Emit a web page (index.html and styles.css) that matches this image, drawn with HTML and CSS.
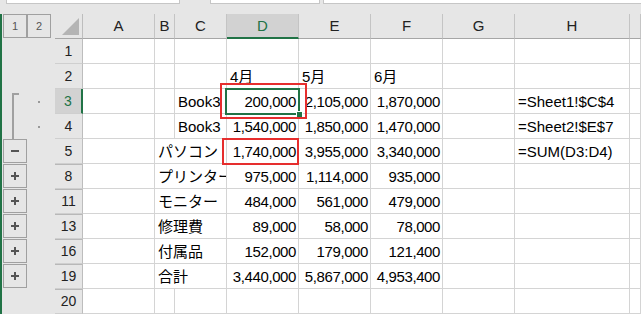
FILE: index.html
```html
<!DOCTYPE html>
<html lang="ja">
<head>
    <meta charset="UTF-8">
    <meta name="viewport" content="width=device-width, initial-scale=1.0">
    <title>アウトライン集計</title>
    <link rel="stylesheet" href="styles.css">
</head>
<body>
    <div class="bar">
        <div class="fld f-name"></div>
        <div class="fld f-mid"></div>
        <div class="fld f-main"></div>
    </div>

    <div class="sheet">
        <!-- 見出し行 -->
        <div class="ol"><span class="btn lvl">1</span><span class="btn lvl">2</span></div>
        <div class="corner"><span class="tri"></span></div>
        <div class="ch">A</div>
        <div class="ch">B</div>
        <div class="ch">C</div>
        <div class="ch on">D</div>
        <div class="ch">E</div>
        <div class="ch">F</div>
        <div class="ch">G</div>
        <div class="ch">H</div>
        <div class="ch"></div>

        <!-- 1 -->
        <div class="ol"></div>
        <div class="rh">1</div>
        <div class="c"></div><div class="c"></div><div class="c"></div><div class="c"></div>
        <div class="c"></div><div class="c"></div><div class="c"></div><div class="c"></div><div class="c"></div>

        <!-- 2 -->
        <div class="ol"></div>
        <div class="rh">2</div>
        <div class="c"></div><div class="c"></div><div class="c"></div>
        <div class="c">4月</div>
        <div class="c">5月</div>
        <div class="c">6月</div>
        <div class="c"></div><div class="c"></div><div class="c"></div>

        <!-- 3 -->
        <div class="ol">
            <span class="slot"><span class="brk-top"></span></span>
            <span class="slot mid"><i class="dot"></i></span>
        </div>
        <div class="rh on">3</div>
        <div class="c"></div><div class="c"></div>
        <div class="c">Book3</div>
        <div class="c num sel">200,000<span class="cursor"><span class="handle"></span></span><span class="mark mark-a"></span></div>
        <div class="c num">2,105,000</div>
        <div class="c num">1,870,000</div>
        <div class="c"></div>
        <div class="c">=Sheet1!$C$4</div>
        <div class="c"></div>

        <!-- 4 -->
        <div class="ol">
            <span class="slot"><span class="brk-line"></span></span>
            <span class="slot mid"><i class="dot"></i></span>
        </div>
        <div class="rh">4</div>
        <div class="c"></div><div class="c"></div>
        <div class="c">Book3</div>
        <div class="c num">1,540,000</div>
        <div class="c num">1,850,000</div>
        <div class="c num">1,470,000</div>
        <div class="c"></div>
        <div class="c">=Sheet2!$E$7</div>
        <div class="c"></div>

        <!-- 5 -->
        <div class="ol"><span class="btn"><svg width="8" height="2" viewBox="0 0 8 2"><rect width="8" height="2" fill="#555"/></svg></span></div>
        <div class="rh">5</div>
        <div class="c"></div>
        <div class="c wide">パソコン</div>
        <div class="c num sel">1,740,000<span class="mark mark-b"></span></div>
        <div class="c num">3,955,000</div>
        <div class="c num">3,340,000</div>
        <div class="c"></div>
        <div class="c">=SUM(D3:D4)</div>
        <div class="c"></div>

        <!-- 8 -->
        <div class="ol"><span class="btn"><svg width="8" height="8" viewBox="0 0 8 8"><path d="M0 4H8M4 0V8" stroke="#555" stroke-width="2"/></svg></span></div>
        <div class="rh gap">8</div>
        <div class="c"></div>
        <div class="c wide">プリンター</div>
        <div class="c num">975,000</div>
        <div class="c num">1,114,000</div>
        <div class="c num">935,000</div>
        <div class="c"></div><div class="c"></div><div class="c"></div>

        <!-- 11 -->
        <div class="ol"><span class="btn"><svg width="8" height="8" viewBox="0 0 8 8"><path d="M0 4H8M4 0V8" stroke="#555" stroke-width="2"/></svg></span></div>
        <div class="rh gap">11</div>
        <div class="c"></div>
        <div class="c wide">モニター</div>
        <div class="c num">484,000</div>
        <div class="c num">561,000</div>
        <div class="c num">479,000</div>
        <div class="c"></div><div class="c"></div><div class="c"></div>

        <!-- 13 -->
        <div class="ol"><span class="btn"><svg width="8" height="8" viewBox="0 0 8 8"><path d="M0 4H8M4 0V8" stroke="#555" stroke-width="2"/></svg></span></div>
        <div class="rh gap">13</div>
        <div class="c"></div>
        <div class="c wide">修理費</div>
        <div class="c num">89,000</div>
        <div class="c num">58,000</div>
        <div class="c num">78,000</div>
        <div class="c"></div><div class="c"></div><div class="c"></div>

        <!-- 16 -->
        <div class="ol"><span class="btn"><svg width="8" height="8" viewBox="0 0 8 8"><path d="M0 4H8M4 0V8" stroke="#555" stroke-width="2"/></svg></span></div>
        <div class="rh gap">16</div>
        <div class="c"></div>
        <div class="c wide">付属品</div>
        <div class="c num">152,000</div>
        <div class="c num">179,000</div>
        <div class="c num">121,400</div>
        <div class="c"></div><div class="c"></div><div class="c"></div>

        <!-- 19 -->
        <div class="ol"><span class="btn"><svg width="8" height="8" viewBox="0 0 8 8"><path d="M0 4H8M4 0V8" stroke="#555" stroke-width="2"/></svg></span></div>
        <div class="rh gap">19</div>
        <div class="c"></div>
        <div class="c wide">合計</div>
        <div class="c num">3,440,000</div>
        <div class="c num">5,867,000</div>
        <div class="c num">4,953,400</div>
        <div class="c"></div><div class="c"></div><div class="c"></div>

        <!-- 20 -->
        <div class="ol"></div>
        <div class="rh gap">20</div>
        <div class="c"></div><div class="c"></div><div class="c"></div><div class="c"></div>
        <div class="c"></div><div class="c"></div><div class="c"></div><div class="c"></div><div class="c"></div>
    </div>
</body>
</html>
```

FILE: styles.css
```css
body {
    margin: 0;
    width: 641px;
    height: 314px;
    overflow: hidden;
    background-color: #e6e6e6;
    font-family: "Liberation Sans", "Noto Sans CJK JP", sans-serif;
    font-size: 15px;
    color: #000;
}
.bar {
    display: flex;
    align-items: flex-start;
    height: 14px;
}
.fld {
    height: 4px;
    box-sizing: border-box;
    background-color: #fff;
    border: 1px solid #c6c6c6;
    border-top: 0;
}
.f-name {
    margin-left: 6px;
    width: 174px;
}
.f-mid {
    margin-left: 30px;
    width: 110px;
}
.f-main {
    margin-left: 3px;
    flex: 1;
    border-right: 0;
}
.sheet {
    display: grid;
    grid-template-columns: 53px 28px 72px 20px 52px 72px 72px 72px 72px 115px 1fr;
    grid-template-rows: repeat(12, 25px);
    border-left: 2px solid #217346;
    background-color: #fff;
}
.sheet > div {
    box-sizing: border-box;
    min-width: 0;
}

/* outline area */
.ol {
    display: flex;
    padding-left: 1px;
    background-color: #e6e6e6;
}
.slot {
    display: flex;
    width: 24px;
}
.slot.mid {
    align-items: center;
    justify-content: center;
}
.btn {
    display: flex;
    align-items: center;
    justify-content: center;
    width: 24px;
    height: 24px;
    box-sizing: border-box;
    border: 1px solid #a0a0a0;
}
.lvl {
    font-size: 11px;
    color: #555;
}
.brk-top {
    width: 5px;
    margin: 4px 0 0 9px;
    border-left: 2px solid #a0a0a0;
    border-top: 2px solid #a0a0a0;
}
.brk-line {
    width: 2px;
    margin-left: 9px;
    background-color: #a0a0a0;
}
.dot {
    width: 2px;
    height: 2px;
    margin-left: -1px;
    background-color: #999;
}

/* headers */
.corner {
    display: flex;
    justify-content: flex-end;
    align-items: flex-end;
    padding: 0 3px 3px 0;
    background-color: #e6e6e6;
    border-right: 1px solid #bdbdbd;
    border-bottom: 1px solid #a6a6a6;
}
.tri {
    width: 0;
    height: 0;
    border-left: 17px solid transparent;
    border-bottom: 17px solid #b4b4b4;
}
.ch {
    background-color: #e6e6e6;
    border-right: 1px solid #c4c4c4;
    border-bottom: 1px solid #a6a6a6;
    text-align: center;
    line-height: 24px;
    color: #222;
}
.ch.on {
    background-color: #d2d2d2;
    border-bottom: 2px solid #217346;
    line-height: 23px;
    color: #217346;
}
.rh {
    display: flex;
    justify-content: center;
    align-items: flex-end;
    padding-bottom: 3px;
    background-color: #e6e6e6;
    border-right: 1px solid #bdbdbd;
    border-bottom: 1px solid #cfcfcf;
    font-size: 14px;
    line-height: 17px;
    color: #222;
}
.rh.on {
    background-color: #d2d2d2;
    border-right: 2px solid #217346;
    color: #217346;
}
.rh.gap {
    box-shadow: inset 0 1px 0 #b8b8b8;
}

/* cells */
.c {
    display: flex;
    align-items: flex-end;
    padding: 0 2px 3px 3px;
    border-right: 1px solid #d4d4d4;
    border-bottom: 1px solid #d4d4d4;
    line-height: 17px;
    white-space: nowrap;
    overflow: hidden;
}
.num {
    justify-content: flex-end;
    letter-spacing: -0.4px;
}
.wide {
    grid-column: span 2;
    padding-right: 0;
}
.sel {
    position: relative;
    overflow: visible;
}
.cursor {
    position: absolute;
    left: -2px;
    right: -2px;
    top: -1px;
    bottom: -2px;
    border: 2px solid #217346;
}
.handle {
    position: absolute;
    right: -5px;
    bottom: -5px;
    width: 5px;
    height: 5px;
    background-color: #217346;
    border: 1px solid #fff;
}
.mark {
    position: absolute;
    border: 2px solid #e62e2e;
}
.mark-a {
    left: -7px;
    right: -9px;
    top: -6px;
    bottom: -6px;
}
.mark-b {
    left: -5px;
    right: -1px;
    top: -1px;
    bottom: -2px;
}
```
